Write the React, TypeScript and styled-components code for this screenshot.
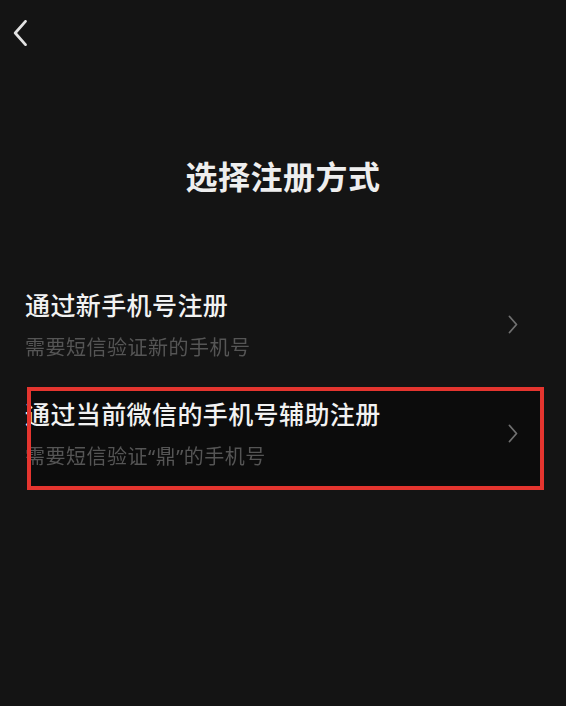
import { FC } from "react";
import styled, { createGlobalStyle } from "styled-components";

const Global = createGlobalStyle`
    html, body {
        margin: 0;
        padding: 0;
        background: #141414;
    }
    body {
        font-family: "Noto Sans CJK SC", "Noto Sans", sans-serif;
    }
`;

const Page = styled.div`
    width: 566px;
    height: 706px;
    background: #141414;
    display: flex;
    flex-direction: column;
    overflow: hidden;
`;

const Header = styled.div`
    height: 60px;
    padding: 20px 0 0 13px;
    box-sizing: border-box;
`;

const BackButton = styled.button`
    display: block;
    width: 14px;
    height: 26px;
    padding: 0;
    border: 0;
    background: none;
    color: #e2e2e2;
`;

const Heading = styled.h1`
    margin: 95px 0 0;
    font-size: 32px;
    line-height: 40px;
    font-weight: 700;
    letter-spacing: 0.5px;
    color: #eeeeee;
    text-align: center;
`;

const Options = styled.div`
    display: flex;
    flex-direction: column;
    gap: 37px;
    margin-top: 93px;
`;

const Row = styled.div<{ $marked?: boolean }>`
    position: relative;
    isolation: isolate;
    display: flex;
    align-items: center;
    padding: 0 48px 0 25px;
    ${(p) =>
        p.$marked &&
        `
        &::before, &::after {
            content: "";
            position: absolute;
            left: 27px;
            right: 22px;
            top: -10px;
            bottom: -21px;
        }
        &::before {
            background: #0c0c0c;
            z-index: -1;
        }
        &::after {
            border: 4px solid #e5352f;
            box-sizing: border-box;
        }
    `}
`;

const Texts = styled.div`
    flex: 1;
    display: flex;
    flex-direction: column;
    gap: 16px;
`;

const Title = styled.div`
    font-size: 25px;
    line-height: 32px;
    font-weight: 500;
    letter-spacing: 0.4px;
    color: #f2f2f2;
`;

const Hint = styled.div`
    font-family: "Noto Sans", "Noto Sans CJK SC", sans-serif;
    font-size: 20px;
    line-height: 24px;
    letter-spacing: 0.5px;
    color: #555555;
    filter: blur(0.4px);
`;

const Arrow = styled.span`
    display: flex;
    width: 10px;
    height: 19px;
    color: #707070;
`;

const Chevron: FC<{ dir: "left" | "right" }> = ({ dir }) => (
    <svg width="100%" height="100%" viewBox="0 0 10 19" fill="none">
        <path
            d={dir === "left" ? "M9 1L1.5 9.5L9 18" : "M1.5 1.5L8.5 9.5L1.5 17.5"}
            stroke="currentColor"
            strokeWidth={dir === "left" ? 2 : 1.8}
            strokeLinecap="round"
            strokeLinejoin="round"
        />
    </svg>
);

const options = [
    { title: "通过新手机号注册", hint: "需要短信验证新的手机号", marked: false },
    { title: "通过当前微信的手机号辅助注册", hint: "需要短信验证“鼎”的手机号", marked: true },
];

const App: FC = () => (
    <Page>
        <Global />
        <Header>
            <BackButton aria-label="返回">
                <Chevron dir="left" />
            </BackButton>
        </Header>
        <Heading>选择注册方式</Heading>
        <Options>
            {options.map((o) => (
                <Row key={o.title} $marked={o.marked}>
                    <Texts>
                        <Title>{o.title}</Title>
                        <Hint>{o.hint}</Hint>
                    </Texts>
                    <Arrow>
                        <Chevron dir="right" />
                    </Arrow>
                </Row>
            ))}
        </Options>
    </Page>
);

export default App;
